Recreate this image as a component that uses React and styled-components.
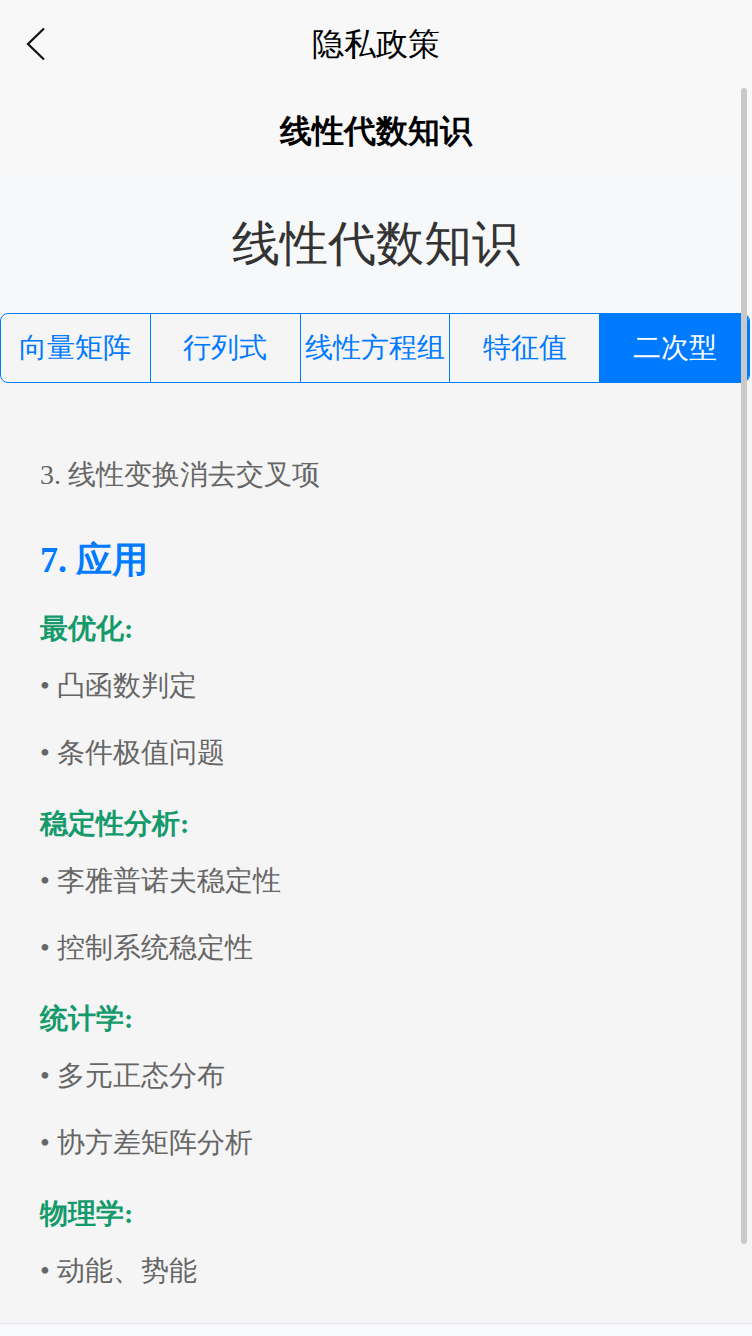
import React from "react";
import styled, { createGlobalStyle } from "styled-components";

const GlobalStyle = createGlobalStyle`
  html, body { margin: 0; padding: 0; }
  body {
    background: #f7f9fb;
    font-family: "Liberation Serif", serif;
    -webkit-font-smoothing: antialiased;
  }
  * { box-sizing: border-box; }
`;

const Page = styled.div`
  width: 752px;
  height: 1336px;
  display: flex;
  flex-direction: column;
  overflow: hidden;
  background: #f7f9fb;
`;

const NavBar = styled.header`
  height: 88px;
  flex: none;
  display: flex;
  align-items: center;
  justify-content: center;
  position: relative;
  background: #f8f8f8;
`;

const BackButton = styled.button`
  position: absolute;
  left: 16px;
  top: 22px;
  width: 40px;
  height: 44px;
  border: none;
  background: transparent;
  padding: 0;
  display: flex;
  align-items: center;
  justify-content: center;
  cursor: pointer;
`;

const NavTitle = styled.h1`
  margin: 0;
  font-size: 32px;
  font-weight: 500;
  color: #000;
  line-height: 1;
`;

const Scroller = styled.main`
  position: relative;
  height: 1236px;
  flex: none;
  overflow: hidden;
  background: #f5f5f5;
  border-bottom: 1px solid #e4e8ec;
`;

const ScrollThumb = styled.div`
  position: absolute;
  right: 5px;
  top: 0;
  width: 6px;
  height: 1156px;
  border-radius: 3px;
  background: #c9c9c9;
`;

const SubHeader = styled.div`
  height: 87px;
  display: flex;
  align-items: center;
  justify-content: center;
  background: #f8f8f8;
  font-size: 32px;
  font-weight: 700;
  color: #000;
`;

const Hero = styled.div`
  height: 138px;
  display: flex;
  align-items: center;
  justify-content: center;
  background: #f7f8fa;
  font-size: 48px;
  color: #333;
`;

const Tabs = styled.nav`
  width: 750px;
  height: 70px;
  display: flex;
  border: 1px solid #007aff;
  border-radius: 8px;
  overflow: hidden;
  background: #f5f5f5;
`;

const Tab = styled.div`
  flex: 1;
  display: flex;
  align-items: center;
  justify-content: center;
  font-size: 28px;
  white-space: nowrap;
  color: ${(p) => (p.$active ? "#fff" : "#007aff")};
  background: ${(p) => (p.$active ? "#007aff" : "transparent")};
  border-right: ${(p) => (p.$last ? "none" : "1px solid #007aff")};
`;

const Content = styled.section`
  display: flex;
  flex-direction: column;
  padding: 72px 40px 0;
`;

const Para = styled.p`
  margin: 0;
  font-size: 28px;
  line-height: 40px;
  color: #666;
`;

const SectionTitle = styled.h2`
  margin: 40px 0 20px;
  font-size: 36px;
  line-height: 50px;
  font-weight: 700;
  color: #007aff;
`;

const GroupTitle = styled.h3`
  margin: 4px 0 17px;
  font-size: 28px;
  line-height: 40px;
  font-weight: 700;
  color: #149a6b;
`;

const Item = styled.p`
  margin: 0 0 27px;
  font-size: 28px;
  line-height: 40px;
  color: #666;
`;

const tabs = ["向量矩阵", "行列式", "线性方程组", "特征值", "二次型"];

const groups = [
  { title: "最优化:", items: ["凸函数判定", "条件极值问题"] },
  { title: "稳定性分析:", items: ["李雅普诺夫稳定性", "控制系统稳定性"] },
  { title: "统计学:", items: ["多元正态分布", "协方差矩阵分析"] },
  { title: "物理学:", items: ["动能、势能"] },
];

export default function App() {
  return (
    <>
      <GlobalStyle />
      <Page>
        <NavBar>
          <BackButton aria-label="返回">
            <svg width="22" height="34" viewBox="0 0 22 34" fill="none">
              <path d="M19 1.5 L3 17 L19 32.5" stroke="#111" strokeWidth="2.2" strokeLinejoin="miter" />
            </svg>
          </BackButton>
          <NavTitle>隐私政策</NavTitle>
        </NavBar>
        <Scroller>
          <SubHeader>线性代数知识</SubHeader>
          <Hero>线性代数知识</Hero>
          <Tabs>
            {tabs.map((t, i) => (
              <Tab key={t} $active={i === tabs.length - 1} $last={i === tabs.length - 1}>
                {t}
              </Tab>
            ))}
          </Tabs>
          <Content>
            <Para>3. 线性变换消去交叉项</Para>
            <SectionTitle>7. 应用</SectionTitle>
            {groups.map((g) => (
              <React.Fragment key={g.title}>
                <GroupTitle>{g.title}</GroupTitle>
                {g.items.map((it) => (
                  <Item key={it}>• {it}</Item>
                ))}
              </React.Fragment>
            ))}
          </Content>
          <ScrollThumb />
        </Scroller>
      </Page>
    </>
  );
}
